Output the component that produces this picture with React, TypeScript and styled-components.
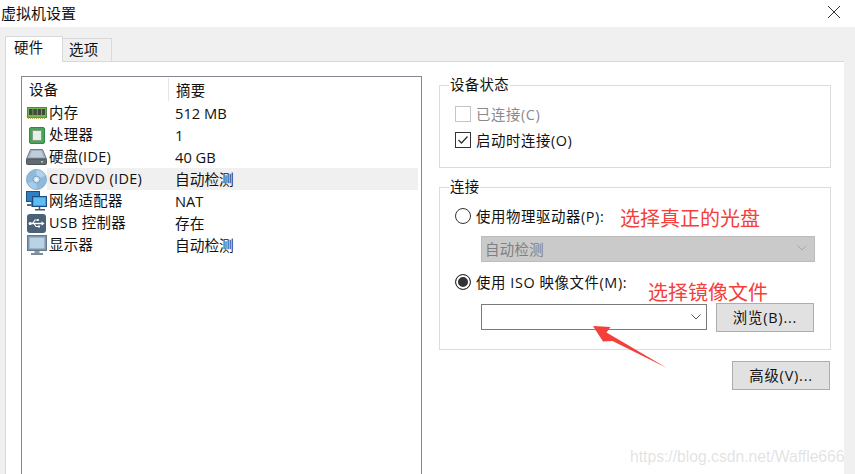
import styled, { createGlobalStyle } from "styled-components";

const GlobalStyle = createGlobalStyle`
  html, body {
    margin: 0;
    padding: 0;
    background: #fff;
  }
  body {
    font-family: "Open Sans", "Noto Sans CJK SC", sans-serif;
    font-size: 14.4px;
    letter-spacing: 0.35px;
    color: #111;
  }
`;

const RamIcon = () => (
  <svg width="20" height="12" viewBox="0 0 20 12">
    <rect x="0.5" y="0.5" width="19" height="10" fill="#74b655" stroke="#468f3e" />
    <rect x="2" y="2" width="3.5" height="6" fill="#45483f" />
    <rect x="6.3" y="2" width="3.5" height="6" fill="#45483f" />
    <rect x="10.6" y="2" width="3.5" height="6" fill="#45483f" />
    <rect x="14.9" y="2" width="3.2" height="6" fill="#45483f" />
    <path d="M1 11.3h18" stroke="#b9a85a" strokeWidth="1.4" strokeDasharray="1 1" />
  </svg>
);

const CpuIcon = () => (
  <svg width="16" height="17" viewBox="0 0 16 17">
    <rect x="0.5" y="0.5" width="15" height="16" rx="1.5" fill="#4aa35a" stroke="#2f8a45" />
    <rect x="3.5" y="3.5" width="9" height="10" fill="#e6efe4" stroke="#7f9f80" />
  </svg>
);

const DiskIcon = () => (
  <svg width="21" height="16" viewBox="0 0 21 16">
    <path d="M4.5 0.5h12l4 9.5H0.5z" fill="#a3b5c4" stroke="#6f7b86" />
    <path d="M6 2h9l2.5 6H3.5z" fill="#c0cdd8" />
    <rect x="0.5" y="10" width="20" height="5.5" rx="1" fill="#626a71" stroke="#4a5157" />
    <rect x="15" y="12" width="2" height="1.5" fill="#b7d98b" />
  </svg>
);

const DiscIcon = () => (
  <svg width="21" height="21" viewBox="0 0 22 22">
    <circle cx="11" cy="11" r="10.5" fill="#8fbade" stroke="#7ea9cc" />
    <path d="M11 1a10 10 0 0 1 9 6L11 11z" fill="#b4d3ea" />
    <path d="M11 21a10 10 0 0 1-9-6l9-4z" fill="#a9cce6" />
    <circle cx="11" cy="11" r="3.6" fill="#cfe2f1" stroke="#6d9cc2" />
    <circle cx="11" cy="11" r="1.3" fill="#fff" />
  </svg>
);

const NetworkIcon = () => (
  <svg width="21" height="20" viewBox="0 0 21 20">
    <rect x="0.5" y="0.5" width="13" height="10" fill="#2f7fc4" stroke="#1d4f7f" />
    <path d="M6 11v4h3" fill="none" stroke="#1d4f7f" strokeWidth="1.4" />
    <rect x="1" y="13" width="7" height="2" fill="#4d6f8f" />
    <rect x="6.5" y="5.5" width="14" height="10" fill="#35a2ea" stroke="#1d4f7f" />
    <rect x="8" y="7" width="11" height="7" fill="#5fbdf5" />
    <path d="M13.5 16v2" stroke="#3d5a75" strokeWidth="1.5" />
    <rect x="9" y="18" width="10" height="1.5" fill="#3d5a75" />
  </svg>
);

const UsbIcon = () => (
  <svg width="19" height="19" viewBox="0 0 19 19">
    <rect x="0" y="0" width="19" height="19" rx="3" fill="#4b6178" />
    <path d="M2 9.5h13" stroke="#fff" strokeWidth="1.4" />
    <path d="M14.5 7.2l3 2.3-3 2.3z" fill="#fff" />
    <circle cx="3.2" cy="9.5" r="1.6" fill="#fff" />
    <path d="M5.5 9.5l2.5-3.5h2.5M7 9.5l2 3h2.5" fill="none" stroke="#fff" strokeWidth="1.1" />
    <circle cx="11" cy="6" r="1.1" fill="#fff" />
    <rect x="11" y="11.5" width="2" height="2" fill="#fff" />
  </svg>
);

const MonitorIcon = () => (
  <svg width="20" height="20" viewBox="0 0 20 20">
    <rect x="0.5" y="0.5" width="19" height="15" fill="#7f97ad" stroke="#66788a" />
    <rect x="2.5" y="2.5" width="15" height="11" fill="#b9d2e6" />
    <rect x="7.5" y="16" width="5" height="2" fill="#8d9aa6" />
    <rect x="4" y="18" width="12" height="2" fill="#7d8b98" />
  </svg>
);

const devices = [
  { name: "内存", summary: "512 MB", icon: <RamIcon /> },
  { name: "处理器", summary: "1", icon: <CpuIcon /> },
  { name: "硬盘(IDE)", summary: "40 GB", icon: <DiskIcon /> },
  { name: "CD/DVD (IDE)", summary: "自动检测", icon: <DiscIcon />, selected: true },
  { name: "网络适配器", summary: "NAT", icon: <NetworkIcon /> },
  { name: "USB 控制器", summary: "存在", icon: <UsbIcon /> },
  { name: "显示器", summary: "自动检测", icon: <MonitorIcon /> },
];

const App = () => {
  return (
    <Window>
      <GlobalStyle />
      <TitleBar>
        <Title>虚拟机设置</Title>
        <CloseIcon width="14" height="14" viewBox="0 0 14 14">
          <path d="M1 1l12 12M13 1L1 13" stroke="#333" strokeWidth="1" fill="none" />
        </CloseIcon>
      </TitleBar>
      <Body>
        <TabStrip>
          <Tab $active>硬件</Tab>
          <Tab>选项</Tab>
        </TabStrip>
        <Page>
          <DeviceList>
            <ListHeader>
              <DeviceHead>设备</DeviceHead>
              <SummaryHead>摘要</SummaryHead>
            </ListHeader>
            {devices.map((d) => (
              <DeviceRow key={d.name}>
                <IconCell>{d.icon}</IconCell>
                <RowBody $selected={d.selected}>
                  <DeviceName>{d.name}</DeviceName>
                  <Summary>{d.summary}</Summary>
                </RowBody>
              </DeviceRow>
            ))}
          </DeviceList>
          <SideColumn>
            <StatusGroup>
              <Legend>设备状态</Legend>
              <OptionRow $disabled>
                <CheckBox $disabled />
                <OptionLabel>已连接(C)</OptionLabel>
              </OptionRow>
              <OptionRow>
                <CheckBox>
                  <svg width="14" height="14" viewBox="0 0 14 14">
                    <path d="M2.5 7l3 3 6-6.5" fill="none" stroke="#333" strokeWidth="1.3" />
                  </svg>
                </CheckBox>
                <OptionLabel>启动时连接(O)</OptionLabel>
              </OptionRow>
            </StatusGroup>
            <ConnectGroup>
              <Legend>连接</Legend>
              <OptionRow>
                <Radio />
                <OptionLabel>使用物理驱动器(P):</OptionLabel>
              </OptionRow>
              <DisabledSelect>
                自动检测
                <Chevron width="10" height="6" viewBox="0 0 10 6">
                  <path d="M0.5 0.5L5 5l4.5-4.5" fill="none" stroke="#a8a8a8" />
                </Chevron>
              </DisabledSelect>
              <IsoOption>
                <Radio $checked />
                <OptionLabel>使用 ISO 映像文件(M):</OptionLabel>
              </IsoOption>
              <BrowseRow>
                <Combo>
                  <Chevron width="10" height="6" viewBox="0 0 10 6">
                    <path d="M0.5 0.5L5 5l4.5-4.5" fill="none" stroke="#555" />
                  </Chevron>
                </Combo>
                <Button>浏览(B)...</Button>
              </BrowseRow>
            </ConnectGroup>
            <AdvancedButton>高级(V)...</AdvancedButton>
          </SideColumn>
        </Page>
      </Body>
      <Note $x={620} $y={205}>选择真正的光盘</Note>
      <Note $x={648} $y={279}>选择镜像文件</Note>
      <Arrow width="80" height="50" viewBox="590 322 80 50">
        <path d="M593 326L610.5 327L606.5 332.5L667 368L612.5 341L603 341.5Z" fill="#f4403a" />
      </Arrow>
      <Watermark>https://blog.csdn.net/Waffle666</Watermark>
    </Window>
  );
};

const Window = styled.div`
  position: relative;
  width: 855px;
  height: 474px;
  overflow: hidden;
  display: flex;
  flex-direction: column;
`;

const TitleBar = styled.div`
  height: 27px;
  flex: none;
  display: flex;
  align-items: center;
  justify-content: space-between;
  padding: 0 14px 3px 1px;
  box-sizing: border-box;
  background: #fff;
`;

const Title = styled.div`
  font-size: 15px;
  letter-spacing: 0;
  color: #111;
`;

const CloseIcon = styled.svg`
  display: block;
`;

const Body = styled.div`
  flex: 1;
  min-height: 0;
  display: flex;
  flex-direction: column;
  background: #f0f0f0;
  padding: 9px 11px 0 5px;
`;

const TabStrip = styled.div`
  height: 25px;
  flex: none;
  display: flex;
  align-items: flex-start;
  position: relative;
  z-index: 1;
`;

const Tab = styled.div<{ $active?: boolean }>`
  box-sizing: border-box;
  width: ${(p) => (p.$active ? "58px" : "50px")};
  height: ${(p) => (p.$active ? "26px" : "23px")};
  margin-left: ${(p) => (p.$active ? "0" : "-1px")};
  margin-top: ${(p) => (p.$active ? "0" : "2px")};
  padding-left: ${(p) => (p.$active ? "8px" : "6px")};
  line-height: 22px;
  background: ${(p) => (p.$active ? "#fff" : "#f0f0f0")};
  border: 1px solid #d9d9d9;
  border-bottom: none;
`;

const Page = styled.div`
  flex: 1;
  min-height: 0;
  display: flex;
  background: #fff;
  border-top: 1px solid #d9d9d9;
  border-left: 1px solid #d9d9d9;
  padding: 14px 0 0 15px;
`;

const DeviceList = styled.div`
  box-sizing: border-box;
  width: 401px;
  flex: none;
  margin-bottom: -10px;
  border: 1px solid #828790;
  padding-left: 4px;
`;

const ListHeader = styled.div`
  height: 25px;
  display: flex;
  align-items: center;
`;

const DeviceHead = styled.div`
  box-sizing: border-box;
  width: 143px;
  padding-left: 3px;
  height: 23px;
  line-height: 23px;
  border-right: 1px solid #e5e5e5;
`;

const SummaryHead = styled.div`
  padding-left: 7px;
`;

const DeviceRow = styled.div`
  height: 22px;
  display: flex;
  align-items: center;
`;

const IconCell = styled.div`
  width: 21px;
  flex: none;
  display: flex;
  justify-content: center;
  align-items: center;
`;

const RowBody = styled.div<{ $selected?: boolean }>`
  width: 371px;
  height: 22px;
  line-height: 22px;
  display: flex;
  padding-left: 2px;
  box-sizing: border-box;
  background: ${(p) => (p.$selected ? "#f0f0f0" : "transparent")};
`;

const DeviceName = styled.span`
  width: 126px;
  flex: none;
`;

const Summary = styled.span`
  font-size: 14.7px;
  letter-spacing: 0;
`;

const SideColumn = styled.div`
  width: 392px;
  margin-left: 17px;
  padding-top: 9px;
  display: flex;
  flex-direction: column;
`;

const Group = styled.div`
  position: relative;
  box-sizing: border-box;
  border: 1px solid #dcdcdc;
  padding: 20px 15px 0;
`;

const StatusGroup = styled(Group)`
  height: 83px;
`;

const ConnectGroup = styled(Group)`
  height: 163px;
  margin-top: 19px;
`;

const Legend = styled.div`
  position: absolute;
  left: 9px;
  top: -11px;
  padding: 0 1px;
  height: 20px;
  line-height: 20px;
  background: #fff;
`;

const OptionRow = styled.div<{ $disabled?: boolean }>`
  display: flex;
  align-items: center;
  gap: 5px;
  height: 16px;
  color: ${(p) => (p.$disabled ? "#8a8a8a" : "#111")};
  & + & {
    margin-top: 10px;
  }
`;

const OptionLabel = styled.span`
  padding-bottom: 2px;
  letter-spacing: 0.6px;
`;

const CheckBox = styled.span<{ $disabled?: boolean }>`
  box-sizing: border-box;
  width: 16px;
  height: 16px;
  flex: none;
  display: flex;
  align-items: center;
  justify-content: center;
  background: #fff;
  border: 1px solid ${(p) => (p.$disabled ? "#c4c4c4" : "#333")};
`;

const Radio = styled.span<{ $checked?: boolean }>`
  box-sizing: border-box;
  width: 16px;
  height: 16px;
  flex: none;
  border-radius: 50%;
  border: 1px solid #333;
  background: ${(p) => (p.$checked ? "#333" : "#fff")};
  box-shadow: ${(p) => (p.$checked ? "inset 0 0 0 2px #fff" : "none")};
`;

const Chevron = styled.svg`
  display: block;
`;

const DisabledSelect = styled.div`
  box-sizing: border-box;
  width: 334px;
  height: 26px;
  margin: 12px 0 0 26px;
  padding: 0 7px 2px 3px;
  display: flex;
  align-items: center;
  justify-content: space-between;
  background: #cacaca;
  border: 1px solid #bcbcbc;
  color: #808080;
`;

const IsoOption = styled(OptionRow)`
  margin-top: 12px;
`;

const BrowseRow = styled.div`
  display: flex;
  gap: 9px;
  margin: 13px 0 0 26px;
`;

const Combo = styled.div`
  box-sizing: border-box;
  width: 226px;
  height: 26px;
  margin-top: 1px;
  padding-right: 5px;
  display: flex;
  align-items: center;
  justify-content: flex-end;
  background: #fff;
  border: 1px solid #7a7a7a;
`;

const Button = styled.div`
  box-sizing: border-box;
  width: 98px;
  height: 29px;
  padding-bottom: 2px;
  letter-spacing: 0.8px;
  display: flex;
  align-items: center;
  justify-content: center;
  background: #e1e1e1;
  border: 1px solid #adadad;
`;

const AdvancedButton = styled(Button)`
  align-self: flex-end;
  margin: 11px 1px 0 0;
`;

const Note = styled.div<{ $x: number; $y: number }>`
  position: absolute;
  left: ${(p) => p.$x}px;
  top: ${(p) => p.$y}px;
  font-size: 20px;
  letter-spacing: 0;
  line-height: 28px;
  color: #f4403a;
`;

const Arrow = styled.svg`
  position: absolute;
  left: 590px;
  top: 322px;
`;

const Watermark = styled.div`
  position: absolute;
  left: 630px;
  top: 448px;
  font-family: "Liberation Sans", sans-serif;
  font-size: 15.7px;
  letter-spacing: 0;
  color: rgba(170, 170, 170, 0.35);
`;

export default App;
